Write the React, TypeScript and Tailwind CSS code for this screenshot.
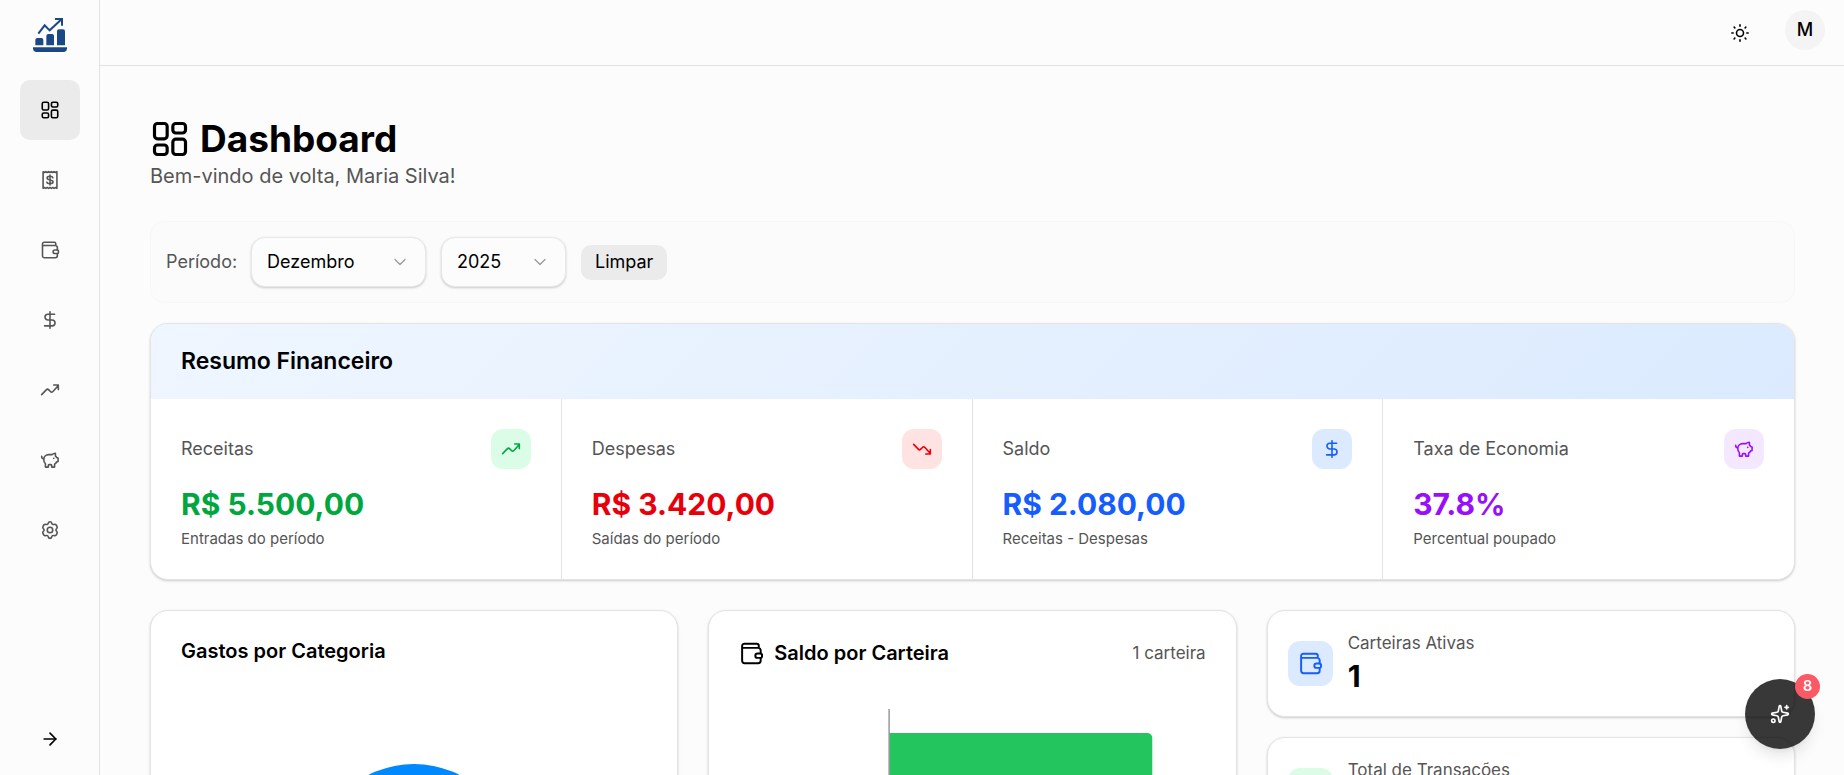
import React, { useState } from "react";
import { ArrowRight, ChevronDown, Sparkles } from "lucide-react";

interface IconProps {
  className?: string;
}

const Icon: React.FC<IconProps & { children: React.ReactNode }> = ({ className = "size-5", children }) => (
  <svg
    viewBox="0 0 24 24"
    fill="none"
    stroke="currentColor"
    strokeWidth="1.9"
    strokeLinecap="round"
    strokeLinejoin="round"
    aria-hidden="true"
    className={`shrink-0 ${className}`}
  >
    {children}
  </svg>
);

const DashboardIcon = (props: IconProps) => (
  <Icon {...props}>
    <rect x="2.7" y="2.7" width="7.6" height="9.2" rx="1.8" />
    <rect x="2.7" y="15.6" width="7.6" height="5.700" rx="1.8" />
    <rect x="13.7" y="2.7" width="7.6" height="5.700" rx="1.8" />
    <rect x="13.7" y="12.1" width="7.6" height="9.2" rx="1.8" />
  </Icon>
);

const InvoiceIcon = (props: IconProps) => (
  <Icon {...props}>
    <path d="M3.700 2l1.660 1 1.660-1 1.660 1 1.660-1 1.660 1 1.660-1 1.660 1 1.660-1 1.660 1 1.660-1v20l-1.660-1-1.660 1-1.660-1-1.660 1-1.660-1-1.660 1-1.660-1-1.660 1-1.660-1-1.660 1z" />
    <path d="M15.500 9.200c-.3-1-1.500-1.700-3.500-1.700-2.200 0-3.500.8-3.500 2.200 0 3.200 7.200 1.400 7.200 4.500 0 1.500-1.600 2.300-3.700 2.300s-3.500-.8-3.800-1.900M12 6v12" />
  </Icon>
);

const WalletIcon = (props: IconProps) => (
  <Icon {...props}>
    <path d="M19 6.500V4.700a2 2 0 0 0-2-2H5a2 2 0 0 0-2 2V19a2.300 2.300 0 0 0 2.300 2.300h13.200A2.300 2.300 0 0 0 20.800 19v-2.600M3 6.600h15.500A2.300 2.300 0 0 1 20.800 9v3" />
    <path d="M17.800 12h3a1.300 1.300 0 0 1 1.300 1.300v1.600a1.300 1.300 0 0 1-1.300 1.300h-3a2.100 2.100 0 0 1 0-4.200z" />
  </Icon>
);

const DollarIcon = (props: IconProps) => (
  <Icon {...props}>
    <path d="M12 2v20M17.500 5H9.500a3.500 3.500 0 0 0 0 7h5a3.500 3.500 0 0 1 0 7H5.500" />
  </Icon>
);

const TrendUpIcon = (props: IconProps) => (
  <Icon {...props}>
    <path d="M2 17.500l5.200-5.400c.8-.8 1.200-1.200 1.800-1.200s1 .4 1.800 1.200l1.400 1.400c.8.8 1.200 1.200 1.800 1.200s1-.4 1.800-1.200L22 6.500M16.500 6H22v5.500" />
  </Icon>
);

const TrendDownIcon = (props: IconProps) => (
  <Icon {...props}>
    <path d="M2 6.500l5.200 5.400c.8.8 1.200 1.200 1.800 1.200s1-.4 1.800-1.200l1.400-1.400c.8-.8 1.200-1.200 1.800-1.200s1 .4 1.800 1.200L22 17.500M16.500 18H22v-5.500" />
  </Icon>
);

const PiggyIcon = (props: IconProps) => (
  <Icon {...props}>
    <path d="M18.500 7.200V3.800c-1.800 0-3 .7-3.800 1.700H10.500C7 5.500 4.500 8 4.500 11.500c0 2 .8 3.800 2 5v4h3.500v-2c0-.6.4-1 1-1h2c.6 0 1 .4 1 1v2h3.500v-3.500c1-.6 1.800-1.500 2.200-2.500l2-.8v-4l-1.800-.7c-.3-.8-.8-1.400-1.400-1.800z" />
    <path d="M2 7.500c0 2 .8 3 2.500 3.200M16.500 10v.1" />
  </Icon>
);

const GearIcon = (props: IconProps) => (
  <Icon {...props}>
    <circle cx="12" cy="12" r="3.300" />
    <path d="M12 2c1.300 0 1.800.6 2 1.600.3 1.500 1.500 2.200 2.900 1.700 1-.4 1.800-.3 2.500.7l1 1.800c.6 1 .4 1.800-.4 2.500-1.200 1-1.200 2.400 0 3.400.8.7 1 1.500.4 2.500l-1 1.800c-.7 1-1.500 1.100-2.500.7-1.400-.5-2.600.2-2.900 1.700-.2 1-.7 1.600-2 1.600s-1.800-.6-2-1.600c-.3-1.500-1.500-2.200-2.900-1.700-1 .4-1.800.3-2.500-.7l-1-1.800c-.6-1-.4-1.800.4-2.500 1.200-1 1.200-2.400 0-3.400-.8-.7-1-1.500-.4-2.500l1-1.800c.7-1 1.500-1.100 2.500-.7C8.500 5.800 9.700 5.100 10 3.600 10.200 2.600 10.700 2 12 2z" />
  </Icon>
);

const SunIcon = (props: IconProps) => (
  <Icon {...props}>
    <circle cx="12" cy="12" r="4.200" />
    <path d="M12 2.200v1.600M12 20.200v1.600M2.200 12h1.600M20.200 12h1.600M5 5l.8.8M18.200 18.200l.8.8M5 19l.8-.8M18.200 5.800l.8-.8" />
  </Icon>
);

const Logo = () => (
  <svg viewBox="0 0 102 102" fill="#1b4884" className="size-[34px]" aria-hidden="true">
    <path d="M0 88h102v3c0 7-4 11-11 11H11C4 102 0 98 0 91z" />
    <path d="M7 82V66q0-6 6-6h12q6 0 6 6v16zM40 82V54q0-6 6-6h11q6 0 6 6v28zM72 82V40q0-6 6-6h12q6 0 6 6v42z" />
    <path d="M16 47l19-25 15 15L84 5M66 3h21v20" fill="none" stroke="#1b4884" strokeWidth="6" />
  </svg>
);

const navItems = [
  { label: "Dashboard", icon: DashboardIcon },
  { label: "Transações", icon: InvoiceIcon },
  { label: "Carteiras", icon: WalletIcon },
  { label: "Receitas", icon: DollarIcon },
  { label: "Investimentos", icon: TrendUpIcon },
  { label: "Economias", icon: PiggyIcon },
  { label: "Configurações", icon: GearIcon },
];

const summary = [
  { label: "Receitas", value: "R$ 5.500,00", hint: "Entradas do período", icon: TrendUpIcon, color: "text-green-600", tile: "bg-green-100" },
  { label: "Despesas", value: "R$ 3.420,00", hint: "Saídas do período", icon: TrendDownIcon, color: "text-red-600", tile: "bg-red-100" },
  { label: "Saldo", value: "R$ 2.080,00", hint: "Receitas - Despesas", icon: DollarIcon, color: "text-blue-600", tile: "bg-blue-100" },
  { label: "Taxa de Economia", value: "37.8%", hint: "Percentual poupado", icon: PiggyIcon, color: "text-purple-600", tile: "bg-purple-100" },
];

const months = ["Janeiro", "Fevereiro", "Março", "Abril", "Maio", "Junho", "Julho", "Agosto", "Setembro", "Outubro", "Novembro", "Dezembro"];
const years = ["2023", "2024", "2025"];

const card = "rounded-[18px] border border-[#e4e4e4] bg-white shadow-[0_1px_3px_rgba(0,0,0,0.1),0_1px_2px_rgba(0,0,0,0.1)]";

interface SelectProps {
  label: string;
  value: string;
  options: string[];
  onChange: (value: string) => void;
  className: string;
}

const Select: React.FC<SelectProps> = ({ label, value, options, onChange, className }) => (
  <div className={`relative ${className}`}>
    <select
      aria-label={label}
      value={value}
      onChange={(e) => onChange(e.target.value)}
      className="h-[50px] w-full appearance-none rounded-[14px] border border-[#e8e8e8] bg-[#fcfcfc] px-[15px] text-lg text-black shadow-[0_1px_3px_rgba(0,0,0,0.1),0_1px_2px_rgba(0,0,0,0.1)]"
    >
      {options.map((option) => (
        <option key={option}>{option}</option>
      ))}
    </select>
    <ChevronDown
      className="pointer-events-none absolute top-[15px] right-4 size-5 text-[#999]"
      strokeWidth={1.5}
    />
  </div>
);

const StatCard: React.FC<{ label: string; value: string; icon: React.ReactNode; tile: string }> = ({ label, value, icon, tile }) => (
  <div className={`flex items-center gap-[15px] p-5 ${card}`}>
    <div className={`flex size-[45px] items-center justify-center rounded-xl ${tile}`}>{icon}</div>
    <div>
      <p className="text-[17px] leading-[25px] text-[#555]">{label}</p>
      <p className="text-[30px] leading-10 font-bold">{value}</p>
    </div>
  </div>
);

export default function App() {
  const [month, setMonth] = useState("Dezembro");
  const [year, setYear] = useState("2025");

  const resetPeriod = () => {
    setMonth("Dezembro");
    setYear("2025");
  };

  return (
    <div className="flex h-screen overflow-hidden bg-[#fcfcfc] font-['Inter',sans-serif] text-black">
      <aside className="flex w-[100px] shrink-0 flex-col items-center border-r border-[#e2e2e2] pt-[18px] pb-[26px]">
        <Logo />
        <nav className="mt-7 flex flex-col gap-[10px]">
          {navItems.map(({ label, icon: NavIcon }, i) => (
            <a
              key={label}
              href="#"
              aria-label={label}
              className={`flex size-[60px] items-center justify-center rounded-[10px] ${
                i === 0 ? "bg-[#ebebeb] text-black" : "text-[#555]"
              }`}
            >
              <NavIcon />
            </a>
          ))}
        </nav>
        <button aria-label="Expandir menu" className="mt-auto">
          <ArrowRight className="size-5" />
        </button>
      </aside>

      <div className="flex min-w-0 flex-1 flex-col">
        <header className="flex h-[66px] shrink-0 items-center justify-end gap-[35px] border-b border-[#e2e2e2] pr-[19px]">
          <button aria-label="Alternar tema">
            <SunIcon />
          </button>
          <div className="pb-[5px]">
            <button className="flex size-10 items-center justify-center rounded-full bg-[#f4f4f4] text-lg font-medium">
              M
            </button>
          </div>
        </header>

        <main className="flex-1 overflow-y-auto py-[50px] pr-[49px] pl-[50px] [scrollbar-width:none]">
          <h1 className="flex items-center gap-[10px] text-[37px] leading-[45px] font-bold">
            <DashboardIcon className="size-10" />
            Dashboard
          </h1>
          <p className="text-xl leading-[30px] text-[#555]">Bem-vindo de volta, Maria Silva!</p>

          <div className="mt-[30px] flex items-center gap-[15px] rounded-[14px] border border-[#f7f7f7] bg-[#fbfbfb] p-[15px]">
            <span className="w-[70px] text-lg text-[#555]">Período:</span>
            <Select label="Mês" value={month} options={months} onChange={setMonth} className="w-[175px]" />
            <Select label="Ano" value={year} options={years} onChange={setYear} className="w-[125px]" />
            <button onClick={resetPeriod} className="h-[35px] rounded-[10px] bg-[#ebebeb] px-[14px] text-lg">
              Limpar
            </button>
          </div>

          <section className={`mt-5 overflow-hidden ${card}`}>
            <h2 className="bg-linear-135 from-blue-50 to-blue-100 px-[30px] text-[23px] leading-[75px] font-semibold">
              Resumo Financeiro
            </h2>
            <div className="grid grid-cols-4 divide-x divide-[#e2e2e2]">
              {summary.map(({ label, value, hint, icon: StatIcon, color, tile }) => (
                <div key={label} className="p-[30px]">
                  <div className="flex items-center justify-between">
                    <span className="text-lg text-[#555]">{label}</span>
                    <div className={`flex size-10 items-center justify-center rounded-xl ${tile} ${color}`}>
                      <StatIcon />
                    </div>
                  </div>
                  <p className={`mt-[15px] text-[30px] leading-10 font-bold ${color}`}>{value}</p>
                  <p className="mt-[5px] text-[15px] leading-5 text-[#555]">{hint}</p>
                </div>
              ))}
            </div>
          </section>

          <div className="mt-[30px] grid grid-cols-3 gap-[30px]">
            <section className={`p-[30px] ${card}`}>
              <h3 className="text-xl leading-5 font-semibold">Gastos por Categoria</h3>
              <svg viewBox="0 0 200 200" className="mx-auto mt-[103px] size-[200px]">
                <circle cx="100" cy="100" r="100" fill="#0088fe" />
              </svg>
            </section>

            <section className={`p-[30px] ${card}`}>
              <div className="flex items-center justify-between">
                <h3 className="flex items-center gap-[10px] text-xl leading-[25px] font-semibold">
                  <WalletIcon className="size-[25px]" />
                  Saldo por Carteira
                </h3>
                <span className="text-[17px] leading-[25px] text-[#555]">1 carteira</span>
              </div>
              <svg viewBox="0 0 466 240" className="mt-[43px] w-full">
                <path d="M150 24h258a5 5 0 0 1 5 5v182a5 5 0 0 1-5 5H150z" fill="#22c55e" />
                <path d="M150 0v240" stroke="#999" strokeWidth="1.500" />
              </svg>
            </section>

            <div className="flex flex-col gap-5">
              <StatCard
                label="Carteiras Ativas"
                value="1"
                tile="bg-blue-100"
                icon={<WalletIcon className="size-[25px] text-blue-600" />}
              />
              <StatCard
                label="Total de Transações"
                value="8"
                tile="bg-green-100"
                icon={<TrendUpIcon className="size-[25px] text-green-600" />}
              />
            </div>
          </div>
        </main>
      </div>

      <button
        aria-label="Assistente"
        className="fixed right-[29px] bottom-[26px] flex size-[70px] items-center justify-center rounded-full bg-black/78 text-white shadow-lg"
      >
        <Sparkles className="size-5" />
        <span className="absolute -top-[5px] -right-[5px] flex size-[25px] items-center justify-center rounded-full bg-[#fb5a64] text-[15px] font-semibold">
          8
        </span>
      </button>
    </div>
  );
}
